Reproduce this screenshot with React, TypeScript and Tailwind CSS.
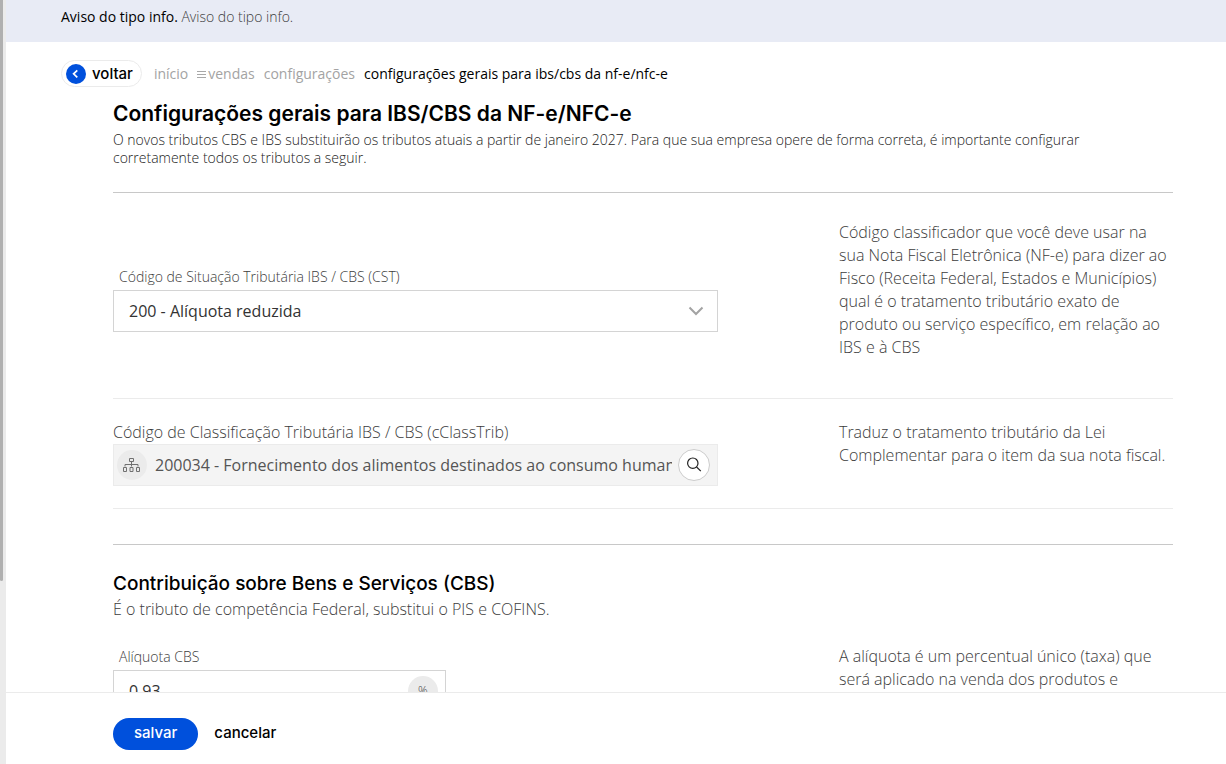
import type { ReactNode } from 'react'

interface HelpRowProps {
  help: ReactNode
  className?: string
  children: ReactNode
}

function HelpRow({ help, className = '', children }: HelpRowProps) {
  return (
    <div className={`grid grid-cols-[minmax(0,1fr)_334px] gap-x-[121px] ${className}`}>
      <div>{children}</div>
      <p className="leading-[23px]">{help}</p>
    </div>
  )
}

function ChevronLeft() {
  return (
    <svg width="20" height="20" viewBox="0 0 20 20" fill="none" stroke="#fff" strokeWidth="1.7" aria-hidden="true">
      <path d="M11.3 6.3 7.6 9.8l3.7 3.5" />
    </svg>
  )
}

function ChevronDown() {
  return (
    <svg width="16" height="10" viewBox="0 0 16 10" fill="none" stroke="#a3a3a3" strokeWidth="2" aria-hidden="true">
      <path d="M1.5 1.5 8 8l6.5-6.5" />
    </svg>
  )
}

function MenuLines() {
  return (
    <svg width="9" height="9" viewBox="0 0 9 9" stroke="#a8a8a8" className="mt-[2px]" aria-hidden="true">
      <path d="M0 1.5h9M0 4.5h9M0 7.5h9" />
    </svg>
  )
}

function Sitemap() {
  return (
    <svg width="18" height="16" viewBox="0 0 18 16" fill="none" stroke="#707070" aria-hidden="true">
      <path d="M6.5 1.5h4v3h-4zM8.5 4.5v5M2 9.5v-2h13v2M.5 10.5h3v4h-3zM7 10.5h3v4H7zM13.5 10.5h3v4h-3z" />
    </svg>
  )
}

function Magnifier() {
  return (
    <svg width="16" height="16" viewBox="0 0 16 16" fill="none" stroke="#222" strokeWidth="1.2" aria-hidden="true">
      <circle cx="6.8" cy="6.2" r="5.2" />
      <path d="m10.6 10 4.2 4.2" />
    </svg>
  )
}

export default function App() {
  return (
    <div className="flex h-screen overflow-hidden bg-white font-['Open_Sans',sans-serif] text-base font-light text-[#3c3c3c]">
      <div className="w-[6px] shrink-0 bg-[#ebebeb]">
        <div className="h-[76%] w-[3px] rounded-b-sm bg-[#b0b0b0]" />
      </div>

      <div className="flex min-w-0 flex-1 flex-col">
        <div className="min-h-0 flex-1 overflow-hidden">
          <div className="h-[42px] bg-[#e8ebf5] pt-2 pl-[55px] text-sm leading-[18px]">
            <strong className="font-normal text-black">Aviso do tipo info.</strong> Aviso do tipo info.
          </div>

          <nav className="mt-[18px] flex items-center pl-[55px] text-sm font-normal text-[#a3a3a3]">
            <button className="flex h-[27px] items-center gap-[6px] rounded-full border border-[#ebebeb] pr-2 pl-1 font-[Inter,sans-serif] text-[15px] font-medium text-black">
              <span className="rounded-full bg-[#0050dc]">
                <ChevronLeft />
              </span>
              voltar
            </button>
            <a href="#inicio" className="ml-3">início</a>
            <a href="#vendas" className="ml-[9px] flex items-center gap-[2px]">
              <MenuLines />
              vendas
            </a>
            <a href="#configuracoes" className="ml-[9px]">configurações</a>
            <span className="ml-[9px] text-black">configurações gerais para ibs/cbs da nf-e/nfc-e</span>
          </nav>

          <main className="pr-[53px] pl-[107px]">
            <h1 className="mt-3 font-[Inter,sans-serif] text-[21px] leading-[30px] font-semibold text-black">
              Configurações gerais para IBS/CBS da NF-e/NFC-e
            </h1>
            <p className="mt-[2px] text-sm leading-[18px] text-[#222]">
              O novos tributos CBS e IBS substituirão os tributos atuais a partir de janeiro 2027. Para que sua empresa
              opere de forma correta, é importante configurar
              <br />
              corretamente todos os tributos a seguir.
            </p>

            <HelpRow
              className="mt-[25px] items-center border-t border-b border-t-[#c8c8c8] border-b-[#ebebeb] pt-7 pb-[39px]"
              help={
                <>
                  Código classificador que você deve usar na
                  <br />
                  sua Nota Fiscal Eletrônica (NF-e) para dizer ao
                  <br />
                  Fisco (Receita Federal, Estados e Municípios)
                  <br />
                  qual é o tratamento tributário exato de
                  <br />
                  produto ou serviço específico, em relação ao
                  <br />
                  IBS e à CBS
                </>
              }
            >
              <label htmlFor="cst" className="block pt-5 pl-[6px] text-sm leading-[18px]">
                Código de Situação Tributária IBS / CBS (CST)
              </label>
              <div className="relative mt-1">
                <select id="cst" className="h-[42px] w-full appearance-none border border-[#d4d4d4] bg-white px-[15px] font-normal text-[#333]">
                  <option>200 - Alíquota reduzida</option>
                </select>
                <span className="pointer-events-none absolute inset-y-0 right-[14px] flex items-center">
                  <ChevronDown />
                </span>
              </div>
            </HelpRow>

            <HelpRow
              className="border-b border-[#ebebeb] pt-[22px] pb-[22px]"
              help="Traduz o tratamento tributário da Lei Complementar para o item da sua nota fiscal."
            >
              <label htmlFor="cclasstrib" className="block leading-[23px]">
                Código de Classificação Tributária IBS / CBS (cClassTrib)
              </label>
              <div className="flex h-[42px] items-center border border-[#ebebeb] bg-[#f4f4f4] pr-[7px] pl-[3px]">
                <span className="flex size-[30px] shrink-0 items-center justify-center rounded-full bg-[#ebebeb]">
                  <Sitemap />
                </span>
                <input
                  id="cclasstrib"
                  readOnly
                  className="mr-[6px] ml-2 min-w-0 flex-1 font-normal text-[#555]"
                  defaultValue="200034 - Fornecimento dos alimentos destinados ao consumo humano relacionados no Anexo VII"
                />
                <button aria-label="pesquisar" className="flex size-8 shrink-0 items-center justify-center rounded-full border border-[#ccc] bg-white">
                  <Magnifier />
                </button>
              </div>
            </HelpRow>

            <section className="mt-[35px] border-t border-[#c8c8c8] pt-[25px]">
              <h2 className="font-[Inter,sans-serif] text-[19px] leading-7 font-medium text-black">
                Contribuição sobre Bens e Serviços (CBS)
              </h2>
              <p className="leading-[23px]">É o tributo de competência Federal, substitui o PIS e COFINS.</p>
              <HelpRow
                className="mt-6"
                help="A alíquota é um percentual único (taxa) que será aplicado na venda dos produtos e"
              >
                <label htmlFor="aliquota" className="block pt-[3px] pl-[6px] text-sm leading-[18px]">
                  Alíquota CBS
                </label>
                <div className="mt-1 flex h-[42px] w-[55%] items-center border border-[#d4d4d4] pr-[7px] pl-[15px]">
                  <input id="aliquota" className="min-w-0 flex-1 font-normal text-[#333]" defaultValue="0,93" />
                  <span className="flex size-[30px] items-center justify-center rounded-full bg-[#ebebeb] text-xs">%</span>
                </div>
              </HelpRow>
            </section>
          </main>
        </div>

        <footer className="flex h-[72px] shrink-0 items-center gap-4 border-t border-[#ebebeb] pt-[10px] pl-[107px] font-[Inter,sans-serif] text-[15px] font-medium">
          <button className="h-8 rounded-full bg-[#0050dc] px-[21px] text-white">salvar</button>
          <button className="text-black">cancelar</button>
        </footer>
      </div>
    </div>
  )
}
